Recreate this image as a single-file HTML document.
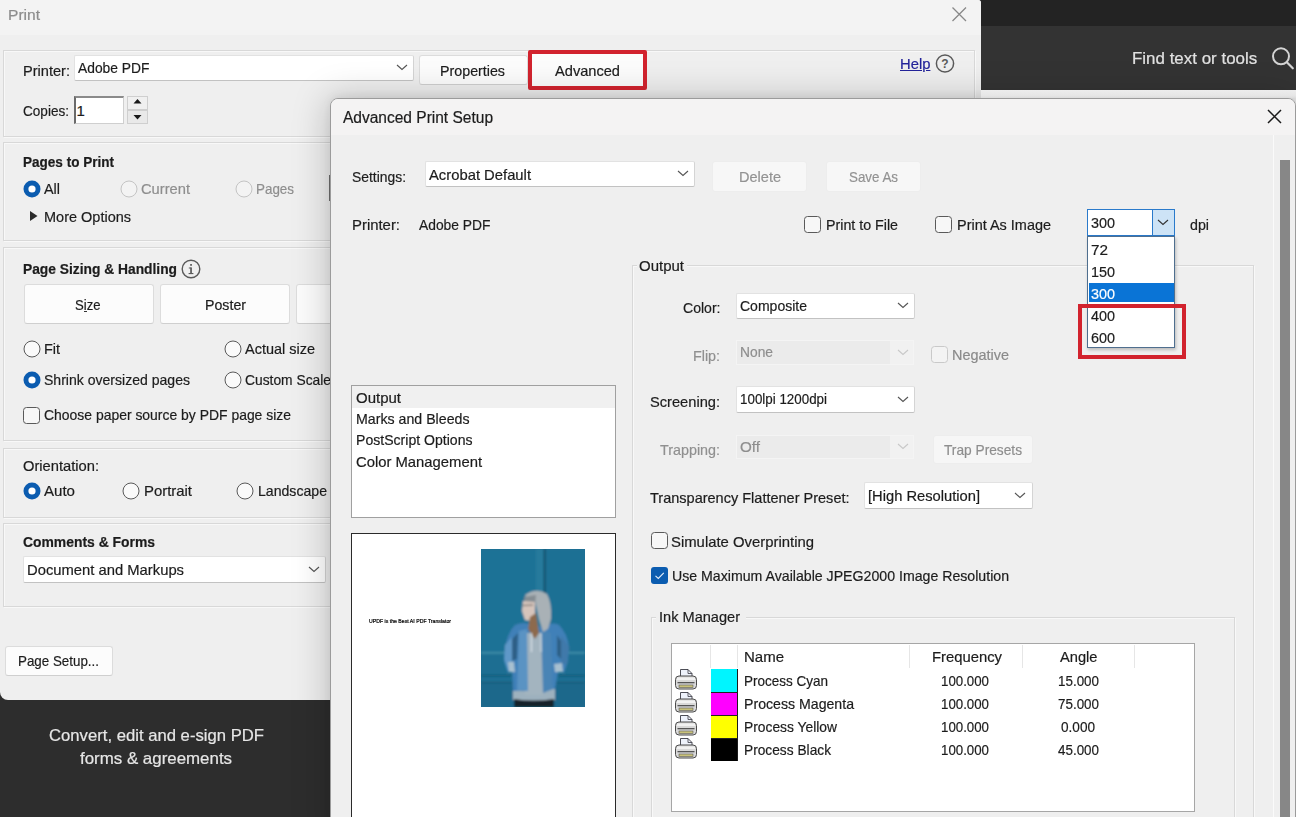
<!DOCTYPE html>
<html><head><meta charset="utf-8"><style>
html,body{margin:0;padding:0;}
body{width:1296px;height:817px;overflow:hidden;position:relative;background:#2d2d2d;font-family:"Liberation Sans",sans-serif;}
.t{position:absolute;white-space:pre;line-height:1.117em;transform-origin:0 0;-webkit-text-stroke:0.2px currentColor;}
</style></head><body>
<div style="position:absolute;left:980.0px;top:0.0px;width:316.0px;height:26.0px;background:#232323;"></div>
<div style="position:absolute;left:980.0px;top:26.0px;width:316.0px;height:63.5px;background:#333333;"></div>
<div style="position:absolute;left:980.0px;top:89.5px;width:316.0px;height:30.0px;background:#e9e9e9;"></div>
<div class="t" style="left:1132.3px;top:49.12px;font-size:17.00px;color:#e2e2e2;transform:scaleX(0.9964);">Find text or tools</div>
<svg style="position:absolute;left:1270px;top:47px" width="26" height="24"><circle cx="11" cy="9.3" r="8" fill="none" stroke="#d4d4d4" stroke-width="2"/><path d="M16.8 15.3 L22.8 21.3" stroke="#d4d4d4" stroke-width="2.2" stroke-linecap="round"/></svg>
<div class="t" style="left:49.0px;top:726.12px;font-size:17.00px;color:#e6e6e6;transform:scaleX(0.9808);">Convert, edit and e-sign PDF</div>
<div class="t" style="left:80.0px;top:749.41px;font-size:17.00px;color:#e6e6e6;transform:scaleX(0.9932);">forms &amp; agreements</div>
<div style="position:absolute;left:-10.0px;top:0.0px;width:991.0px;height:699.5px;background:#efefef;border-radius:0 3px 0 8px;"></div>
<div style="position:absolute;left:-10.0px;top:0.0px;width:991.0px;height:34.5px;background:#f3f3f3;border-radius:0 3px 0 0;"></div>
<div style="position:absolute;left:0.0px;top:690.0px;width:10.0px;height:9.5px;background:#2d2d2d;"></div>
<div style="position:absolute;left:0.0px;top:682.0px;width:18.0px;height:17.5px;background:#efefef;border-radius:0 0 0 8px;"></div>
<div class="t" style="left:8.0px;top:7.32px;font-size:15.00px;color:#8c8c8c;transform:scaleX(1.0376);">Print</div>
<svg style="position:absolute;left:950px;top:6px" width="18" height="18"><path d="M2.5 1.5 L16 15 M16 1.5 L2.5 15" stroke="#888" stroke-width="1.3"/></svg>
<div style="position:absolute;left:3.0px;top:49.5px;width:972.0px;height:87.5px;box-sizing:border-box;border:1px solid #d8d8d8;box-shadow:1px 1px 0 #f8f8f8, inset 1px 1px 0 #f8f8f8;"></div>
<div class="t" style="left:23.0px;top:62.52px;font-size:15.00px;color:#1c1c1c;transform:scaleX(0.9722);">Printer:</div>
<div style="position:absolute;left:73.5px;top:54.5px;width:340.0px;height:26.0px;box-sizing:border-box;background:#fff;border:1px solid #e2e2e2;border-right-color:#d4d4d4;border-bottom-color:#c2c2c2;border-radius:2px;"></div>
<div class="t" style="left:77.6px;top:60.42px;font-size:15.00px;color:#1c1c1c;transform:scaleX(0.9208);">Adobe PDF</div>
<svg style="position:absolute;left:396.0px;top:64.0px" width="12" height="7"><path d="M1 1 L6.0 5.5 L11.0 1" fill="none" stroke="#555" stroke-width="1.1"/></svg>
<div style="position:absolute;left:419.0px;top:54.5px;width:109.0px;height:30.5px;box-sizing:border-box;background:#fcfcfc;border:1px solid #dcdcdc;border-bottom-color:#cfcfcf;border-radius:3px;"></div>
<div class="t" style="left:440.0px;top:62.83px;font-size:15.00px;color:#1c1c1c;transform:scaleX(0.9508);">Properties</div>
<div style="position:absolute;left:530.0px;top:52.0px;width:116.0px;height:36.0px;box-sizing:border-box;background:#fcfcfc;border:1px solid #dcdcdc;border-bottom-color:#cfcfcf;border-radius:3px;"></div>
<div class="t" style="left:555.0px;top:62.83px;font-size:15.00px;color:#1c1c1c;transform:scaleX(0.9743);">Advanced</div>
<div style="position:absolute;left:528.0px;top:50.0px;width:119.0px;height:40.0px;box-sizing:border-box;border:4px solid #d2232e;border-radius:2px;"></div>
<div class="t" style="left:899.6px;top:56.42px;font-size:15.00px;color:#23239a;transform:scaleX(0.9855);text-decoration:underline;">Help</div>
<svg style="position:absolute;left:934px;top:53px" width="22" height="22"><circle cx="11" cy="10.5" r="8.6" fill="none" stroke="#5a5a5a" stroke-width="1.5"/><text x="11" y="15" font-family="Liberation Sans" font-weight="bold" font-size="12" fill="#5a5a5a" text-anchor="middle">?</text></svg>
<div class="t" style="left:23.0px;top:102.92px;font-size:15.00px;color:#1c1c1c;transform:scaleX(0.9045);">Copies:</div>
<div style="position:absolute;left:74.0px;top:96.0px;width:50.0px;height:27.5px;box-sizing:border-box;background:#fff;border:1px solid #cfcfcf;border-left:2px solid #6a6a6a;border-top:2px solid #8a8a8a;"></div>
<div class="t" style="left:76.5px;top:102.92px;font-size:15.00px;color:#1c1c1c;">1</div>
<div style="position:absolute;left:127.0px;top:96.0px;width:21.0px;height:13.5px;box-sizing:border-box;background:#f0f0f0;border:1px solid #cfcfcf;"></div>
<div style="position:absolute;left:127.0px;top:110.0px;width:21.0px;height:13.5px;box-sizing:border-box;background:#e9e9e9;border:1px solid #cfcfcf;"></div>
<svg style="position:absolute;left:127px;top:96px" width="21" height="28"><path d="M6.5 7.5 L10.5 3 L14.5 7.5Z M6.5 19 L10.5 23.5 L14.5 19Z" fill="#1a1a1a"/></svg>
<div style="position:absolute;left:3.0px;top:142.0px;width:335.0px;height:98.5px;box-sizing:border-box;border:1px solid #d8d8d8;box-shadow:1px 1px 0 #f8f8f8, inset 1px 1px 0 #f8f8f8;"></div>
<div class="t" style="left:23.0px;top:154.53px;font-size:14.00px;color:#1c1c1c;font-weight:bold;transform:scaleX(0.9668);">Pages to Print</div>
<svg style="position:absolute;left:22.5px;top:179.5px" width="18" height="18"><circle cx="9" cy="9" r="8.5" fill="#0b5cb0"/><circle cx="9" cy="9" r="3.6" fill="#fff"/></svg>
<div class="t" style="left:44.0px;top:180.93px;font-size:15.00px;color:#1c1c1c;transform:scaleX(0.9597);">All</div>
<svg style="position:absolute;left:119.5px;top:179.5px" width="18" height="18"><circle cx="9" cy="9" r="8" fill="#f3f3f3" stroke="#c4c4c4" stroke-width="1"/></svg>
<div class="t" style="left:141.0px;top:181.43px;font-size:15.00px;color:#8e8e8e;transform:scaleX(0.9797);">Current</div>
<svg style="position:absolute;left:234.5px;top:179.5px" width="18" height="18"><circle cx="9" cy="9" r="8" fill="#f3f3f3" stroke="#c4c4c4" stroke-width="1"/></svg>
<div class="t" style="left:256.0px;top:181.43px;font-size:15.00px;color:#8e8e8e;transform:scaleX(0.8935);">Pages</div>
<div style="position:absolute;left:328.5px;top:175.0px;width:3.0px;height:26.0px;background:#6f6f6f;"></div>
<svg style="position:absolute;left:29px;top:210px" width="10" height="12"><path d="M1 1 L8.5 6 L1 11Z" fill="#2a2a2a"/></svg>
<div class="t" style="left:44.0px;top:209.33px;font-size:15.00px;color:#1c1c1c;transform:scaleX(0.9663);">More Options</div>
<div style="position:absolute;left:3.0px;top:246.5px;width:335.0px;height:194.5px;box-sizing:border-box;border:1px solid #d8d8d8;box-shadow:1px 1px 0 #f8f8f8, inset 1px 1px 0 #f8f8f8;"></div>
<div class="t" style="left:23.0px;top:262.23px;font-size:14.00px;color:#1c1c1c;font-weight:bold;transform:scaleX(0.9851);">Page Sizing &amp; Handling</div>
<svg style="position:absolute;left:180px;top:258px" width="22" height="22"><circle cx="11" cy="11" r="8.8" fill="none" stroke="#5a5a5a" stroke-width="1.4"/><rect x="10.2" y="9.5" width="1.7" height="6.5" fill="#5a5a5a"/><rect x="10.2" y="6" width="1.7" height="1.8" fill="#5a5a5a"/><rect x="8.6" y="15" width="4.8" height="1.1" fill="#5a5a5a"/><rect x="8.8" y="9.5" width="2.5" height="1" fill="#5a5a5a"/></svg>
<div style="position:absolute;left:23.5px;top:284.0px;width:130.0px;height:39.5px;box-sizing:border-box;background:#fcfcfc;border:1px solid #dcdcdc;border-bottom-color:#cfcfcf;border-radius:3px;"></div>
<div class="t" style="left:75.2px;top:297.23px;font-size:15.00px;color:#1c1c1c;transform:scaleX(0.8739);">Size</div>
<div style="position:absolute;left:83.8px;top:311.2px;width:3.5px;height:1.2px;background:#333;"></div>
<div style="position:absolute;left:159.5px;top:284.0px;width:130.0px;height:39.5px;box-sizing:border-box;background:#fcfcfc;border:1px solid #dcdcdc;border-bottom-color:#cfcfcf;border-radius:3px;"></div>
<div class="t" style="left:204.5px;top:297.23px;font-size:15.00px;color:#1c1c1c;transform:scaleX(0.9458);">Poster</div>
<div style="position:absolute;left:296.0px;top:284.0px;width:130.0px;height:39.5px;box-sizing:border-box;background:#fcfcfc;border:1px solid #dcdcdc;border-bottom-color:#cfcfcf;border-radius:3px;"></div>
<div class="t" style="left:360.0px;top:296.18px;font-size:15.00px;color:#1c1c1c;"></div>
<svg style="position:absolute;left:22.5px;top:339.5px" width="18" height="18"><circle cx="9" cy="9" r="8" fill="#fafafa" stroke="#5a5a5a" stroke-width="1"/></svg>
<div class="t" style="left:44.0px;top:340.93px;font-size:15.00px;color:#1c1c1c;transform:scaleX(0.9603);">Fit</div>
<svg style="position:absolute;left:223.5px;top:339.5px" width="18" height="18"><circle cx="9" cy="9" r="8" fill="#fafafa" stroke="#5a5a5a" stroke-width="1"/></svg>
<div class="t" style="left:245.0px;top:340.93px;font-size:15.00px;color:#1c1c1c;transform:scaleX(0.9651);">Actual size</div>
<svg style="position:absolute;left:22.5px;top:370.5px" width="18" height="18"><circle cx="9" cy="9" r="8.5" fill="#0b5cb0"/><circle cx="9" cy="9" r="3.6" fill="#fff"/></svg>
<div class="t" style="left:44.0px;top:371.93px;font-size:15.00px;color:#1c1c1c;transform:scaleX(0.9364);">Shrink oversized pages</div>
<svg style="position:absolute;left:223.5px;top:370.5px" width="18" height="18"><circle cx="9" cy="9" r="8" fill="#fafafa" stroke="#5a5a5a" stroke-width="1"/></svg>
<div class="t" style="left:245.0px;top:371.93px;font-size:15.00px;color:#1c1c1c;transform:scaleX(0.9211);">Custom Scale</div>
<svg style="position:absolute;left:22.5px;top:407.0px" width="17" height="17"><rect x="0.5" y="0.5" width="16" height="16" rx="3" fill="#f7f7f7" stroke="#5a5a5a" stroke-width="1"/></svg>
<div class="t" style="left:44.0px;top:407.43px;font-size:15.00px;color:#1c1c1c;transform:scaleX(0.9287);">Choose paper source by PDF page size</div>
<div style="position:absolute;left:3.0px;top:447.5px;width:335.0px;height:70.0px;box-sizing:border-box;border:1px solid #d8d8d8;box-shadow:1px 1px 0 #f8f8f8, inset 1px 1px 0 #f8f8f8;"></div>
<div class="t" style="left:23.0px;top:458.43px;font-size:15.00px;color:#1c1c1c;transform:scaleX(0.9802);">Orientation:</div>
<svg style="position:absolute;left:22.5px;top:481.5px" width="18" height="18"><circle cx="9" cy="9" r="8.5" fill="#0b5cb0"/><circle cx="9" cy="9" r="3.6" fill="#fff"/></svg>
<div class="t" style="left:44.0px;top:482.93px;font-size:15.00px;color:#1c1c1c;transform:scaleX(1.0047);">Auto</div>
<svg style="position:absolute;left:121.5px;top:481.5px" width="18" height="18"><circle cx="9" cy="9" r="8" fill="#fafafa" stroke="#5a5a5a" stroke-width="1"/></svg>
<div class="t" style="left:144.0px;top:482.93px;font-size:15.00px;color:#1c1c1c;transform:scaleX(0.9929);">Portrait</div>
<svg style="position:absolute;left:235.5px;top:481.5px" width="18" height="18"><circle cx="9" cy="9" r="8" fill="#fafafa" stroke="#5a5a5a" stroke-width="1"/></svg>
<div class="t" style="left:258.0px;top:482.93px;font-size:15.00px;color:#1c1c1c;transform:scaleX(0.9402);">Landscape</div>
<div style="position:absolute;left:3.0px;top:523.0px;width:335.0px;height:83.5px;box-sizing:border-box;border:1px solid #d8d8d8;box-shadow:1px 1px 0 #f8f8f8, inset 1px 1px 0 #f8f8f8;"></div>
<div class="t" style="left:23.0px;top:535.43px;font-size:14.00px;color:#1c1c1c;font-weight:bold;transform:scaleX(0.9924);">Comments &amp; Forms</div>
<div style="position:absolute;left:23.0px;top:556.0px;width:303.0px;height:26.5px;box-sizing:border-box;background:#fff;border:1px solid #e2e2e2;border-right-color:#d4d4d4;border-bottom-color:#c2c2c2;border-radius:2px;"></div>
<div class="t" style="left:27.0px;top:561.92px;font-size:15.00px;color:#1c1c1c;transform:scaleX(0.9860);">Document and Markups</div>
<svg style="position:absolute;left:308.0px;top:565.8px" width="12" height="7"><path d="M1 1 L6.0 5.5 L11.0 1" fill="none" stroke="#555" stroke-width="1.1"/></svg>
<div style="position:absolute;left:4.5px;top:645.5px;width:108.5px;height:30.5px;box-sizing:border-box;background:#fcfcfc;border:1px solid #dcdcdc;border-bottom-color:#cfcfcf;border-radius:3px;"></div>
<div class="t" style="left:18.0px;top:653.42px;font-size:15.00px;color:#1c1c1c;transform:scaleX(0.8911);">Page Setup...</div>
<div style="position:absolute;left:330px;top:97.5px;width:964px;height:740px;background:#efefef;border:1px solid #9b9b9b;border-radius:8px;box-shadow:-2px 0 36px rgba(0,0,0,0.22), 0 -2px 8px rgba(0,0,0,0.06);"></div>
<div style="position:absolute;left:331.0px;top:98.5px;width:964.0px;height:36.5px;background:#f4f3f3;border-radius:7px 7px 0 0;"></div>
<div class="t" style="left:343.0px;top:109.02px;font-size:16.00px;color:#1c1c1c;transform:scaleX(0.9693);">Advanced Print Setup</div>
<svg style="position:absolute;left:1266px;top:108px" width="18" height="18"><path d="M2 2 L15 15 M15 2 L2 15" stroke="#1a1a1a" stroke-width="1.5"/></svg>
<div class="t" style="left:351.7px;top:168.83px;font-size:15.00px;color:#1c1c1c;transform:scaleX(0.9252);">Settings:</div>
<div style="position:absolute;left:425.0px;top:160.5px;width:270.0px;height:26.0px;box-sizing:border-box;background:#fff;border:1px solid #e2e2e2;border-right-color:#d4d4d4;border-bottom-color:#c2c2c2;border-radius:2px;"></div>
<div class="t" style="left:429.0px;top:166.53px;font-size:15.00px;color:#1c1c1c;transform:scaleX(0.9866);">Acrobat Default</div>
<svg style="position:absolute;left:677.0px;top:170.0px" width="12" height="7"><path d="M1 1 L6.0 5.5 L11.0 1" fill="none" stroke="#555" stroke-width="1.1"/></svg>
<div style="position:absolute;left:712.0px;top:161.0px;width:95.0px;height:30.5px;box-sizing:border-box;background:#f7f7f7;border:1px solid #ededed;border-bottom-color:#ededed;border-radius:3px;"></div>
<div class="t" style="left:739.0px;top:168.62px;font-size:15.00px;color:#929292;transform:scaleX(0.9687);">Delete</div>
<div style="position:absolute;left:826.0px;top:161.0px;width:95.0px;height:30.5px;box-sizing:border-box;background:#f7f7f7;border:1px solid #ededed;border-bottom-color:#ededed;border-radius:3px;"></div>
<div class="t" style="left:849.0px;top:168.62px;font-size:15.00px;color:#929292;transform:scaleX(0.8904);">Save As</div>
<div class="t" style="left:351.7px;top:217.43px;font-size:15.00px;color:#1c1c1c;transform:scaleX(0.9929);">Printer:</div>
<div class="t" style="left:418.5px;top:217.43px;font-size:15.00px;color:#1c1c1c;transform:scaleX(0.9221);">Adobe PDF</div>
<svg style="position:absolute;left:804.0px;top:216.0px" width="17" height="17"><rect x="0.5" y="0.5" width="16" height="16" rx="3" fill="#f7f7f7" stroke="#5a5a5a" stroke-width="1"/></svg>
<div class="t" style="left:826.0px;top:217.43px;font-size:15.00px;color:#1c1c1c;transform:scaleX(0.9492);">Print to File</div>
<svg style="position:absolute;left:935.0px;top:216.0px" width="17" height="17"><rect x="0.5" y="0.5" width="16" height="16" rx="3" fill="#f7f7f7" stroke="#5a5a5a" stroke-width="1"/></svg>
<div class="t" style="left:957.0px;top:217.43px;font-size:15.00px;color:#1c1c1c;transform:scaleX(0.9637);">Print As Image</div>
<div class="t" style="left:1190.0px;top:217.43px;font-size:15.00px;color:#1c1c1c;transform:scaleX(0.9493);">dpi</div>
<div style="position:absolute;left:351.0px;top:385.0px;width:265.0px;height:133.0px;box-sizing:border-box;background:#fff;border:1px solid #a0a0a0;"></div>
<div style="position:absolute;left:352.0px;top:386.0px;width:263.0px;height:22.0px;background:#f0f0f0;"></div>
<div class="t" style="left:355.6px;top:390.43px;font-size:15.00px;color:#1c1c1c;transform:scaleX(0.9994);">Output</div>
<div class="t" style="left:355.6px;top:411.43px;font-size:15.00px;color:#1c1c1c;transform:scaleX(0.9454);">Marks and Bleeds</div>
<div class="t" style="left:355.6px;top:432.32px;font-size:15.00px;color:#1c1c1c;transform:scaleX(0.9379);">PostScript Options</div>
<div class="t" style="left:355.6px;top:453.82px;font-size:15.00px;color:#1c1c1c;transform:scaleX(0.9878);">Color Management</div>
<div style="position:absolute;left:351.0px;top:533.0px;width:265.0px;height:300.0px;box-sizing:border-box;background:#fff;border:1px solid #2a2a2a;"></div>
<div class="t" style="left:369.0px;top:619.27px;font-size:5.00px;color:#000;transform:scaleX(1.0355);">UPDF is the Best AI PDF Translator</div>
<svg style="position:absolute;left:481px;top:549px" width="104" height="158" viewBox="0 0 104 158">
<defs><filter id="bl" x="-5%" y="-5%" width="110%" height="110%"><feGaussianBlur stdDeviation="0.8"/></filter></defs>
<rect width="104" height="158" fill="#1d6e92"/>
<g filter="url(#bl)">
<rect x="0" y="0" width="55" height="104" fill="#1f7296"/>
<rect x="65" y="0" width="39" height="104" fill="#1e7094"/>
<rect x="55" y="0" width="8" height="158" fill="#267a9c"/>
<rect x="62.5" y="0" width="2.5" height="158" fill="#175672"/>
<rect x="0" y="103" width="104" height="1.8" fill="#3f8ea8"/>
<rect x="0" y="126" width="104" height="1.2" fill="#175570"/>
<rect x="0" y="133" width="104" height="1" fill="#175570"/>
<rect x="0" y="134" width="104" height="24" fill="#1b688b"/>
<path d="M32 139 Q52 146 74 139 L74 151 Q52 154 32 151Z" fill="#9db1be"/>
<path d="M33 150 Q52 153 73 150 L73 158 L33 158Z" fill="#18222b"/>
<path d="M34 76 Q44 72 50 76 L62 78 Q72 72 78 76 Q86 84 88 98 L87 112 L83 124 L78 118 L74 140 L32 142 L31 120 L27 124 L23 112 Q24 86 34 76Z" fill="#3f80b8"/>
<path d="M24 96 L31 88 L33 116 L27 122 L23 110Z" fill="#5e98c8"/>
<path d="M80 86 L88 98 L86 116 L80 114Z" fill="#4179aa"/>
<path d="M31 90 L37 84 L36 110 L31 112Z" fill="#2f5f86"/>
<path d="M76 86 L80 92 L80 110 L76 106Z" fill="#2f5f86"/>
<path d="M44 84 L62 84 L62 146 L44 146Z" fill="#a3b4bf"/>
<path d="M38 82 L46 80 L47 142 L36 141Z" fill="#5a93c3"/>
<path d="M60 80 L70 84 L72 140 L62 144Z" fill="#4a84b5"/>
<path d="M27 113 L33 113 L34 123 L28 123Z M73 115 L81 114 L82 123 L74 123Z" fill="#a8c0d0"/>
<path d="M44 46 Q55 38 66 45 Q71 54 70 70 L67 80 L62 83 L58 70 L54 52 L46 50Z" fill="#a9b1b6"/>
<path d="M43 48 L55 46 L54 56 L44 56Z" fill="#858d93"/>
<path d="M42 52 L54 53 L54 68 L50 72 L44 71 L41 62Z" fill="#d6c4bb"/>
<path d="M41.5 56.5 L52 56" stroke="#4a4a4a" stroke-width="0.8"/>
<path d="M49 68 L55 64 L58 84 L54 90 L47 80Z" fill="#8d6a4e"/>
<path d="M50.5 84 L50.5 103 M60 84 L60 103" stroke="#e6edf2" stroke-width="0.9"/>
</g>
</svg>
<div style="position:absolute;left:631.8px;top:265.0px;width:622.0px;height:600.0px;box-sizing:border-box;border:1px solid #d8d8d8;box-shadow:1px 1px 0 #f8f8f8, inset 1px 1px 0 #f8f8f8;"></div>
<div style="position:absolute;left:637.0px;top:258.0px;width:50.0px;height:14.0px;background:#efefef;"></div>
<div class="t" style="left:639.3px;top:257.82px;font-size:15.00px;color:#1c1c1c;transform:scaleX(0.9994);">Output</div>
<div class="t" style="left:682.5px;top:300.23px;font-size:15.00px;color:#1c1c1c;transform:scaleX(0.9373);">Color:</div>
<div style="position:absolute;left:735.5px;top:292.5px;width:179.0px;height:26.0px;box-sizing:border-box;background:#fff;border:1px solid #e2e2e2;border-right-color:#d4d4d4;border-bottom-color:#c2c2c2;border-radius:2px;"></div>
<div class="t" style="left:740.0px;top:297.93px;font-size:15.00px;color:#1c1c1c;transform:scaleX(0.9345);">Composite</div>
<svg style="position:absolute;left:896.7px;top:302.0px" width="12" height="7"><path d="M1 1 L6.0 5.5 L11.0 1" fill="none" stroke="#555" stroke-width="1.1"/></svg>
<div class="t" style="left:692.5px;top:347.62px;font-size:15.00px;color:#909090;transform:scaleX(0.9529);">Flip:</div>
<div style="position:absolute;left:736.0px;top:339.5px;width:178.0px;height:25.5px;box-sizing:border-box;background:#ebebeb;border:1px solid #f4f4f4;"></div>
<div style="position:absolute;left:890.0px;top:340.5px;width:23.0px;height:23.5px;background:#f1f1f1;"></div>
<div class="t" style="left:740.0px;top:344.43px;font-size:15.00px;color:#8e8e8e;transform:scaleX(0.9203);">None</div>
<svg style="position:absolute;left:896.7px;top:348.8px" width="12" height="7"><path d="M1 1 L6.0 5.5 L11.0 1" fill="none" stroke="#c8c8c8" stroke-width="1.1"/></svg>
<svg style="position:absolute;left:930.5px;top:345.5px" width="17" height="17"><rect x="0.5" y="0.5" width="16" height="16" rx="3" fill="#f3f3f3" stroke="#c9c9c9" stroke-width="1"/></svg>
<div class="t" style="left:952.0px;top:346.93px;font-size:15.00px;color:#8a8a8a;transform:scaleX(0.9629);">Negative</div>
<div class="t" style="left:650.0px;top:393.53px;font-size:15.00px;color:#1c1c1c;transform:scaleX(0.9762);">Screening:</div>
<div style="position:absolute;left:735.5px;top:385.5px;width:179.0px;height:27.0px;box-sizing:border-box;background:#fff;border:1px solid #e2e2e2;border-right-color:#d4d4d4;border-bottom-color:#c2c2c2;border-radius:2px;"></div>
<div class="t" style="left:740.0px;top:390.93px;font-size:15.00px;color:#1c1c1c;transform:scaleX(0.8916);">100lpi 1200dpi</div>
<svg style="position:absolute;left:896.7px;top:395.5px" width="12" height="7"><path d="M1 1 L6.0 5.5 L11.0 1" fill="none" stroke="#555" stroke-width="1.1"/></svg>
<div class="t" style="left:660.0px;top:441.93px;font-size:15.00px;color:#909090;transform:scaleX(0.9553);">Trapping:</div>
<div style="position:absolute;left:736.0px;top:434.5px;width:178.0px;height:24.5px;box-sizing:border-box;background:#ebebeb;border:1px solid #f4f4f4;"></div>
<div style="position:absolute;left:890.0px;top:435.5px;width:23.0px;height:22.5px;background:#f1f1f1;"></div>
<div class="t" style="left:740.0px;top:439.43px;font-size:15.00px;color:#8e8e8e;transform:scaleX(1.0137);">Off</div>
<svg style="position:absolute;left:896.7px;top:443.2px" width="12" height="7"><path d="M1 1 L6.0 5.5 L11.0 1" fill="none" stroke="#c8c8c8" stroke-width="1.1"/></svg>
<div style="position:absolute;left:932.7px;top:434.5px;width:100.7px;height:29.0px;box-sizing:border-box;background:#f6f6f6;border:1px solid #ededed;border-bottom-color:#ededed;border-radius:3px;"></div>
<div class="t" style="left:944.0px;top:441.93px;font-size:15.00px;color:#8e8e8e;transform:scaleX(0.9144);">Trap Presets</div>
<div class="t" style="left:650.0px;top:490.12px;font-size:15.00px;color:#1c1c1c;transform:scaleX(0.9676);">Transparency Flattener Preset:</div>
<div style="position:absolute;left:864.0px;top:482.0px;width:168.5px;height:26.5px;box-sizing:border-box;background:#fff;border:1px solid #e2e2e2;border-right-color:#d4d4d4;border-bottom-color:#c2c2c2;border-radius:2px;"></div>
<div class="t" style="left:868.0px;top:487.93px;font-size:15.00px;color:#1c1c1c;transform:scaleX(0.9805);">[High Resolution]</div>
<svg style="position:absolute;left:1014.0px;top:491.8px" width="12" height="7"><path d="M1 1 L6.0 5.5 L11.0 1" fill="none" stroke="#555" stroke-width="1.1"/></svg>
<svg style="position:absolute;left:650.5px;top:532.3px" width="17" height="17"><rect x="0.5" y="0.5" width="16" height="16" rx="3" fill="#f7f7f7" stroke="#5a5a5a" stroke-width="1"/></svg>
<div class="t" style="left:671.0px;top:533.92px;font-size:15.00px;color:#1c1c1c;transform:scaleX(0.9915);">Simulate Overprinting</div>
<svg style="position:absolute;left:650.5px;top:567.0px" width="17" height="17"><rect x="0" y="0" width="17" height="17" rx="3" fill="#0b5cb0"/><path d="M4.5 8.8 L7.3 11.5 L12.8 5.8" fill="none" stroke="#e4eefa" stroke-width="1.1"/></svg>
<div class="t" style="left:672.0px;top:568.32px;font-size:15.00px;color:#1c1c1c;transform:scaleX(0.9430);">Use Maximum Available JPEG2000 Image Resolution</div>
<div style="position:absolute;left:651.0px;top:616.8px;width:583.5px;height:250.0px;box-sizing:border-box;border:1px solid #d8d8d8;box-shadow:1px 1px 0 #f8f8f8, inset 1px 1px 0 #f8f8f8;"></div>
<div style="position:absolute;left:656.0px;top:609.0px;width:90.0px;height:14.0px;background:#efefef;"></div>
<div class="t" style="left:659.0px;top:609.12px;font-size:15.00px;color:#1c1c1c;transform:scaleX(0.9716);">Ink Manager</div>
<div style="position:absolute;left:670.5px;top:642.5px;width:524.0px;height:169.0px;box-sizing:border-box;background:#fff;border:1px solid #a6a6a6;"></div>
<div style="position:absolute;left:710.0px;top:645.0px;width:1.0px;height:23.0px;background:#e6e6e6;"></div>
<div style="position:absolute;left:737.0px;top:645.0px;width:1.0px;height:23.0px;background:#e6e6e6;"></div>
<div style="position:absolute;left:909.0px;top:645.0px;width:1.0px;height:23.0px;background:#e6e6e6;"></div>
<div style="position:absolute;left:1021.5px;top:645.0px;width:1.0px;height:23.0px;background:#e6e6e6;"></div>
<div style="position:absolute;left:1134.0px;top:645.0px;width:1.0px;height:23.0px;background:#e6e6e6;"></div>
<div class="t" style="left:743.7px;top:649.12px;font-size:15.00px;color:#1c1c1c;transform:scaleX(0.9997);">Name</div>
<div class="t" style="left:931.6px;top:649.32px;font-size:15.00px;color:#1c1c1c;transform:scaleX(0.9878);">Frequency</div>
<div class="t" style="left:1059.5px;top:649.32px;font-size:15.00px;color:#1c1c1c;transform:scaleX(0.9775);">Angle</div>
<div style="position:absolute;left:711.0px;top:669.0px;width:26.5px;height:23.0px;background:#00f5ff;"></div>
<div class="t" style="left:743.7px;top:673.32px;font-size:15.00px;color:#1c1c1c;transform:scaleX(0.8997);">Process Cyan</div>
<div class="t" style="left:941.3px;top:673.12px;font-size:15.00px;color:#1c1c1c;transform:scaleX(0.8854);">100.000</div>
<div class="t" style="left:1057.5px;top:673.12px;font-size:15.00px;color:#1c1c1c;transform:scaleX(0.8937);">15.000</div>
<svg style="position:absolute;left:674px;top:669px" width="24" height="22"><path d="M6.5 0.5 L14 0.5 L18 4.5 L18 10 L6.5 10Z" fill="#eef2fb" stroke="#3a3a44" stroke-width="0.9"/><path d="M14 0.5 L14 4.5 L18 4.5" fill="none" stroke="#3a3a44" stroke-width="0.8"/><rect x="1.5" y="7" width="21" height="13" rx="3.5" fill="#d9d9d9" stroke="#4a4a4a" stroke-width="1"/><rect x="3" y="8.5" width="18" height="2.5" fill="#f2f2f2"/><rect x="3.5" y="13" width="17" height="1.3" fill="#555"/><rect x="5" y="16" width="14" height="2.6" fill="#c9c27a" stroke="#5a5a5a" stroke-width="0.6"/></svg>
<div style="position:absolute;left:711.0px;top:692.0px;width:26.5px;height:23.0px;background:#ff00ff;"></div>
<div class="t" style="left:743.7px;top:696.32px;font-size:15.00px;color:#1c1c1c;transform:scaleX(0.9424);">Process Magenta</div>
<div class="t" style="left:941.3px;top:696.12px;font-size:15.00px;color:#1c1c1c;transform:scaleX(0.8854);">100.000</div>
<div class="t" style="left:1057.5px;top:696.12px;font-size:15.00px;color:#1c1c1c;transform:scaleX(0.8937);">75.000</div>
<svg style="position:absolute;left:674px;top:692px" width="24" height="22"><path d="M6.5 0.5 L14 0.5 L18 4.5 L18 10 L6.5 10Z" fill="#eef2fb" stroke="#3a3a44" stroke-width="0.9"/><path d="M14 0.5 L14 4.5 L18 4.5" fill="none" stroke="#3a3a44" stroke-width="0.8"/><rect x="1.5" y="7" width="21" height="13" rx="3.5" fill="#d9d9d9" stroke="#4a4a4a" stroke-width="1"/><rect x="3" y="8.5" width="18" height="2.5" fill="#f2f2f2"/><rect x="3.5" y="13" width="17" height="1.3" fill="#555"/><rect x="5" y="16" width="14" height="2.6" fill="#c9c27a" stroke="#5a5a5a" stroke-width="0.6"/></svg>
<div style="position:absolute;left:711.0px;top:715.0px;width:26.5px;height:23.0px;background:#ffff00;"></div>
<div class="t" style="left:743.7px;top:719.32px;font-size:15.00px;color:#1c1c1c;transform:scaleX(0.9218);">Process Yellow</div>
<div class="t" style="left:941.3px;top:719.12px;font-size:15.00px;color:#1c1c1c;transform:scaleX(0.8854);">100.000</div>
<div class="t" style="left:1061.0px;top:719.12px;font-size:15.00px;color:#1c1c1c;transform:scaleX(0.9059);">0.000</div>
<svg style="position:absolute;left:674px;top:715px" width="24" height="22"><path d="M6.5 0.5 L14 0.5 L18 4.5 L18 10 L6.5 10Z" fill="#eef2fb" stroke="#3a3a44" stroke-width="0.9"/><path d="M14 0.5 L14 4.5 L18 4.5" fill="none" stroke="#3a3a44" stroke-width="0.8"/><rect x="1.5" y="7" width="21" height="13" rx="3.5" fill="#d9d9d9" stroke="#4a4a4a" stroke-width="1"/><rect x="3" y="8.5" width="18" height="2.5" fill="#f2f2f2"/><rect x="3.5" y="13" width="17" height="1.3" fill="#555"/><rect x="5" y="16" width="14" height="2.6" fill="#c9c27a" stroke="#5a5a5a" stroke-width="0.6"/></svg>
<div style="position:absolute;left:711.0px;top:738.0px;width:26.5px;height:23.0px;background:#000000;"></div>
<div class="t" style="left:743.7px;top:742.32px;font-size:15.00px;color:#1c1c1c;transform:scaleX(0.9155);">Process Black</div>
<div class="t" style="left:941.3px;top:742.12px;font-size:15.00px;color:#1c1c1c;transform:scaleX(0.8854);">100.000</div>
<div class="t" style="left:1057.5px;top:742.12px;font-size:15.00px;color:#1c1c1c;transform:scaleX(0.8937);">45.000</div>
<svg style="position:absolute;left:674px;top:738px" width="24" height="22"><path d="M6.5 0.5 L14 0.5 L18 4.5 L18 10 L6.5 10Z" fill="#eef2fb" stroke="#3a3a44" stroke-width="0.9"/><path d="M14 0.5 L14 4.5 L18 4.5" fill="none" stroke="#3a3a44" stroke-width="0.8"/><rect x="1.5" y="7" width="21" height="13" rx="3.5" fill="#d9d9d9" stroke="#4a4a4a" stroke-width="1"/><rect x="3" y="8.5" width="18" height="2.5" fill="#f2f2f2"/><rect x="3.5" y="13" width="17" height="1.3" fill="#555"/><rect x="5" y="16" width="14" height="2.6" fill="#c9c27a" stroke="#5a5a5a" stroke-width="0.6"/></svg>
<div style="position:absolute;left:737.0px;top:669.0px;width:1.0px;height:92.0px;background:#1a1a1a;"></div>
<div style="position:absolute;left:711.0px;top:691.5px;width:27.0px;height:1.0px;background:#222;"></div>
<div style="position:absolute;left:711.0px;top:714.5px;width:27.0px;height:1.0px;background:#222;"></div>
<div style="position:absolute;left:711.0px;top:737.5px;width:27.0px;height:1.0px;background:#222;"></div>
<div style="position:absolute;left:981.0px;top:89.5px;width:315.0px;height:8.0px;background:linear-gradient(#ededed,#e6e6e6 70%,#dcdcdc);"></div>
<div style="position:absolute;left:1273.0px;top:135.0px;width:1.0px;height:700.0px;background:#fafafa;"></div>
<div style="position:absolute;left:1280.0px;top:160.0px;width:10.0px;height:660.0px;background:#878787;"></div>
<div style="position:absolute;left:1087.3px;top:208.7px;width:87.5px;height:27.0px;box-sizing:border-box;background:#fff;border:1px solid #2a7acb;"></div>
<div style="position:absolute;left:1152.0px;top:209.7px;width:21.8px;height:25.0px;box-sizing:border-box;background:#cde3f6;border-left:1px solid #2a7acb;"></div>
<svg style="position:absolute;left:1157.0px;top:218.5px" width="12" height="7"><path d="M1 1 L6.0 5.5 L11.0 1" fill="none" stroke="#333" stroke-width="1.1"/></svg>
<div class="t" style="left:1091.0px;top:214.62px;font-size:15.00px;color:#1c1c1c;transform:scaleX(0.9591);">300</div>
<div style="position:absolute;left:1087.0px;top:235.7px;width:88.0px;height:112.0px;box-sizing:border-box;background:#fff;border:1px solid #4f6f8f;box-shadow:1px 2px 3px rgba(0,0,0,0.22);"></div>
<div style="position:absolute;left:1088.5px;top:283.2px;width:85.0px;height:19.0px;background:#0a74d6;"></div>
<div class="t" style="left:1090.5px;top:241.93px;font-size:15.00px;color:#1c1c1c;transform:scaleX(1.0190);">72</div>
<div class="t" style="left:1090.5px;top:263.93px;font-size:15.00px;color:#1c1c1c;transform:scaleX(0.9591);">150</div>
<div class="t" style="left:1090.5px;top:285.93px;font-size:15.00px;color:#ffffff;transform:scaleX(0.9591);">300</div>
<div class="t" style="left:1090.5px;top:307.93px;font-size:15.00px;color:#1c1c1c;transform:scaleX(0.9591);">400</div>
<div class="t" style="left:1090.5px;top:329.93px;font-size:15.00px;color:#1c1c1c;transform:scaleX(0.9591);">600</div>
<div style="position:absolute;left:1077.7px;top:304.2px;width:108.5px;height:55.0px;box-sizing:border-box;border:4px solid #d2232e;"></div>
</body></html>
